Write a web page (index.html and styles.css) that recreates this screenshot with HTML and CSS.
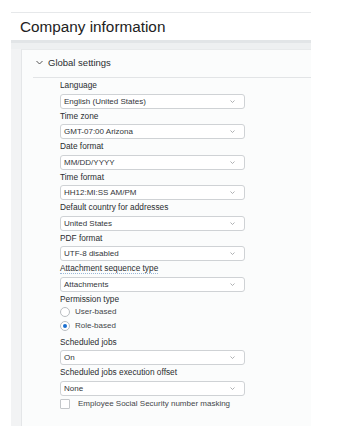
FILE: index.html
```html
<!DOCTYPE html>
<html>
<head>
<meta charset="utf-8">
<link rel="stylesheet" href="styles.css">
</head>
<body>
<div class="page">
  <div class="header">Company information</div>
  <div class="band"></div>
  <div class="body">
    <div class="card">
      <div class="section-head">
        <svg class="chev-head" width="7" height="5" viewBox="0 0 7 5"><path d="M0.5 1 L3.5 4 L6.5 1" fill="none" stroke="#444" stroke-width="0.9"/></svg>
        <span>Global settings</span>
      </div>
      <div class="form">
        <div class="field"><div class="label">Language</div><div class="select"><span>English (United States)</span><svg class="chev" width="5" height="3" viewBox="0 0 5 3"><path d="M0.5 0.5 L2.5 2.5 L4.5 0.5" fill="none" stroke="#9a9da0" stroke-width="0.8"/></svg></div></div>
        <div class="field"><div class="label">Time zone</div><div class="select"><span>GMT-07:00 Arizona</span><svg class="chev" width="5" height="3" viewBox="0 0 5 3"><path d="M0.5 0.5 L2.5 2.5 L4.5 0.5" fill="none" stroke="#9a9da0" stroke-width="0.8"/></svg></div></div>
        <div class="field"><div class="label">Date format</div><div class="select"><span>MM/DD/YYYY</span><svg class="chev" width="5" height="3" viewBox="0 0 5 3"><path d="M0.5 0.5 L2.5 2.5 L4.5 0.5" fill="none" stroke="#9a9da0" stroke-width="0.8"/></svg></div></div>
        <div class="field"><div class="label">Time format</div><div class="select"><span>HH12:MI:SS AM/PM</span><svg class="chev" width="5" height="3" viewBox="0 0 5 3"><path d="M0.5 0.5 L2.5 2.5 L4.5 0.5" fill="none" stroke="#9a9da0" stroke-width="0.8"/></svg></div></div>
        <div class="field"><div class="label">Default country for addresses</div><div class="select"><span>United States</span><svg class="chev" width="5" height="3" viewBox="0 0 5 3"><path d="M0.5 0.5 L2.5 2.5 L4.5 0.5" fill="none" stroke="#9a9da0" stroke-width="0.8"/></svg></div></div>
        <div class="field"><div class="label">PDF format</div><div class="select"><span>UTF-8 disabled</span><svg class="chev" width="5" height="3" viewBox="0 0 5 3"><path d="M0.5 0.5 L2.5 2.5 L4.5 0.5" fill="none" stroke="#9a9da0" stroke-width="0.8"/></svg></div></div>
        <div class="field"><div class="label"><span class="dotted">Attachment sequence type</span></div><div class="select"><span>Attachments</span><svg class="chev" width="5" height="3" viewBox="0 0 5 3"><path d="M0.5 0.5 L2.5 2.5 L4.5 0.5" fill="none" stroke="#9a9da0" stroke-width="0.8"/></svg></div></div>
        <div class="group">
          <div class="label short">Permission type</div>
          <div class="radio-row"><span class="radio"></span><span>User-based</span></div>
          <div class="radio-row"><span class="radio on"></span><span>Role-based</span></div>
        </div>
        <div class="field gap"><div class="label">Scheduled jobs</div><div class="select"><span>On</span><svg class="chev" width="5" height="3" viewBox="0 0 5 3"><path d="M0.5 0.5 L2.5 2.5 L4.5 0.5" fill="none" stroke="#9a9da0" stroke-width="0.8"/></svg></div></div>
        <div class="field"><div class="label">Scheduled jobs execution offset</div><div class="select"><span>None</span><svg class="chev" width="5" height="3" viewBox="0 0 5 3"><path d="M0.5 0.5 L2.5 2.5 L4.5 0.5" fill="none" stroke="#9a9da0" stroke-width="0.8"/></svg></div></div>
        <div class="check-row"><span class="checkbox"></span><span>Employee Social Security number masking</span></div>
      </div>
    </div>
  </div>
</div>
</body>
</html>
```

FILE: styles.css
```css
html, body {
  margin: 0;
  padding: 0;
  background: #ffffff;
  font-family: "Liberation Sans", Arial, sans-serif;
  color: #2f3336;
}
.page {
  margin: 12px 0 0 11px;
  width: 300px;
  border-top: 1px solid #e6e8ea;
  height: 413px;
  display: flex;
  flex-direction: column;
}
.header {
  height: 27px;
  padding-left: 9px;
  display: flex;
  align-items: center;
  font-size: 15.3px;
  color: #222;
}
.band {
  height: 6px;
  background: #eef0f1;
  border-top: 3px solid #e2e5e7;
}
.body {
  flex: 1;
  background: #f2f3f4;
  padding-left: 10px;
  display: flex;
}
.card {
  flex: 1;
  background: #fbfcfc;
  border-left: 1px solid #e4e6e8;
  border-top: 1px solid #e8eaeb;
}
.section-head {
  margin-left: 11px;
  height: 24px;
  padding-bottom: 3px;
  border-bottom: 1px solid #e2e4e6;
  display: flex;
  align-items: center;
  font-size: 9.5px;
  color: #2a2d30;
}
.chev-head {
  margin-left: 3px;
  margin-right: 5px;
}
.form {
  padding-left: 38px;
  width: 185px;
  font-size: 8px;
}
.field {
  display: flex;
  flex-direction: column;
}
.label {
  height: 15.5px;
  line-height: 15.5px;
  font-size: 8.3px;
  color: #2a2d30;
  white-space: nowrap;
}
.label.short {
  height: 12px;
  line-height: 12px;
  margin-top: 1px;
}
.dotted {
  border-bottom: 1px dotted #9bb8d8;
}
.select {
  box-sizing: border-box;
  height: 15px;
  border: 1px solid #cfd2d5;
  border-radius: 3px;
  background: #fff;
  display: flex;
  align-items: center;
  justify-content: space-between;
  padding: 0 9px 0 3px;
  font-size: 8px;
  color: #33363a;
}
.group {
  display: flex;
  flex-direction: column;
}
.radio-row {
  height: 14px;
  display: flex;
  align-items: center;
  font-size: 8px;
  color: #44474a;
}
.radio {
  box-sizing: border-box;
  width: 10px;
  height: 10px;
  border: 1px solid #b9bdc1;
  border-radius: 50%;
  background: #fff;
  margin-right: 5px;
  display: flex;
  align-items: center;
  justify-content: center;
}
.radio.on::after {
  content: "";
  width: 4px;
  height: 4px;
  border-radius: 50%;
  background: #1a6fd0;
}
.field.gap {
  margin-top: 2px;
}
.check-row {
  margin-top: 3px;
  display: flex;
  align-items: center;
  font-size: 8px;
  color: #44474a;
}
.checkbox {
  box-sizing: border-box;
  width: 10px;
  height: 10px;
  border: 1px solid #c4c7ca;
  border-radius: 1px;
  background: #fff;
  margin-right: 8px;
}
```
